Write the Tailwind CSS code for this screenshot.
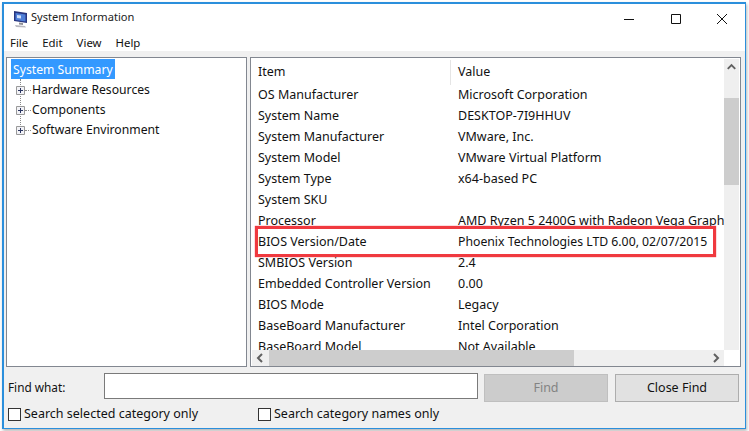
<!DOCTYPE html>
<html lang="en">
<head>
  <meta charset="UTF-8" />
  <title>System Information</title>
  <script src="https://cdn.jsdelivr.net/npm/@tailwindcss/browser@4"></script>
</head>
<body class="w-[749px] h-[431px] overflow-hidden bg-white font-['Noto_Sans',sans-serif] text-[12.5px] text-[#111]">
  <div class="ml-[2px] mt-[2px] w-[744px] h-[427px] border border-[#2b8fdc] border-t-2 border-l-2 flex flex-col bg-[#f0f0f0] shadow-[1px_2px_3px_#b5b5b5]">
    <!-- title bar -->
    <div class="h-[29px] bg-white flex items-center shrink-0">
      <svg class="ml-[7px] w-[18px] h-[18px]" viewBox="0 0 18 18">
        <path d="M3 1l13 2v10l-13-2z" fill="#27357f"/>
        <path d="M4.500 3l10 1.500v7l-10-1.500z" fill="#4f7fd8"/>
        <path d="M6 5l4 .6v3l-4-.6z" fill="#cfe0fb"/>
        <path d="M8 12.500l4 .6v2l-4-.5z" fill="#8e8e96"/>
        <path d="M4 15l10 1 1 1.500-10-.5z" fill="#b9b9c0"/>
      </svg>
      <span class="ml-[2px] pb-[2px] text-[11.1px] text-[#222]">System Information</span>
      <div class="ml-auto flex items-center">
        <svg class="w-[46px] h-[29px]" viewBox="0 0 46 29"><path d="M17 15.500h10" stroke="#111" fill="none"/></svg>
        <svg class="w-[46px] h-[29px]" viewBox="0 0 46 29"><path d="M18.500 10.500h9v9h-9z" stroke="#111" fill="none"/></svg>
        <svg class="w-[46px] h-[29px]" viewBox="0 0 46 29"><path d="M18 10l10 10M28 10l-10 10" stroke="#111" fill="none"/></svg>
      </div>
    </div>
    <!-- menu -->
    <div class="h-[18px] pt-[1px] bg-white flex items-center pl-[6px] gap-[14px] text-[11.4px] shrink-0">
      <span>File</span><span>Edit</span><span>View</span><span>Help</span>
    </div>
    <!-- panes -->
    <div class="mt-[6px] mx-[2px] flex gap-[3px] h-[310px] shrink-0">
      <div class="w-[241px] border border-[#828790] bg-white relative text-[12.2px]">
        <div class="absolute left-[4px] top-[1px] h-[20px] pt-[2px] px-[2px] bg-[#3399ff] text-white flex items-center">System Summary</div>
        <div class="absolute left-[13px] top-[21px] h-[46px] border-l border-dotted border-[#888]"></div>
        <div class="pt-[22px]">
          <div class="h-[20px] flex items-center pl-[9px]">
            <svg class="w-[9px] h-[9px] z-10" viewBox="0 0 9 9"><path d="M.5 .5h8v8h-8z" fill="#f2f2f6" stroke="#999"/><path d="M2 4.500h5M4.500 2v5" stroke="#2a3560"/></svg>
            <span class="w-[6px] border-t border-dotted border-[#888]"></span>
            <span class="ml-[1px]">Hardware Resources</span>
          </div>
          <div class="h-[20px] flex items-center pl-[9px]">
            <svg class="w-[9px] h-[9px] z-10" viewBox="0 0 9 9"><path d="M.5 .5h8v8h-8z" fill="#f2f2f6" stroke="#999"/><path d="M2 4.500h5M4.500 2v5" stroke="#2a3560"/></svg>
            <span class="w-[6px] border-t border-dotted border-[#888]"></span>
            <span class="ml-[1px]">Components</span>
          </div>
          <div class="h-[20px] flex items-center pl-[9px]">
            <svg class="w-[9px] h-[9px] z-10" viewBox="0 0 9 9"><path d="M.5 .5h8v8h-8z" fill="#f2f2f6" stroke="#999"/><path d="M2 4.500h5M4.500 2v5" stroke="#2a3560"/></svg>
            <span class="w-[6px] border-t border-dotted border-[#888]"></span>
            <span class="ml-[1px]">Software Environment</span>
          </div>
        </div>
      </div>
      <div class="w-[491px] border border-[#828790] bg-white relative flex flex-col">
        <div class="flex-1 flex min-h-0">
          <div class="w-[473px] overflow-hidden">
            <div class="h-[27px] pt-[2px] flex items-center">
              <span class="w-[200px] pl-[7px] h-[25px] flex items-center border-r border-[#e5e5e5]">Item</span>
              <span class="pl-[7px]">Value</span>
            </div>
            <div class="h-[21px] flex items-center whitespace-nowrap"><span class="w-[200px] shrink-0 pl-[7px]">OS Manufacturer</span><span class="pl-[7px] shrink-0">Microsoft Corporation</span></div>
            <div class="h-[21px] flex items-center whitespace-nowrap"><span class="w-[200px] shrink-0 pl-[7px]">System Name</span><span class="pl-[7px] shrink-0">DESKTOP-7I9HHUV</span></div>
            <div class="h-[21px] flex items-center whitespace-nowrap"><span class="w-[200px] shrink-0 pl-[7px]">System Manufacturer</span><span class="pl-[7px] shrink-0">VMware, Inc.</span></div>
            <div class="h-[21px] flex items-center whitespace-nowrap"><span class="w-[200px] shrink-0 pl-[7px]">System Model</span><span class="pl-[7px] shrink-0">VMware Virtual Platform</span></div>
            <div class="h-[21px] flex items-center whitespace-nowrap"><span class="w-[200px] shrink-0 pl-[7px]">System Type</span><span class="pl-[7px] shrink-0">x64-based PC</span></div>
            <div class="h-[21px] flex items-center whitespace-nowrap"><span class="w-[200px] shrink-0 pl-[7px]">System SKU</span></div>
            <div class="h-[21px] flex items-center whitespace-nowrap"><span class="w-[200px] shrink-0 pl-[7px]">Processor</span><span class="pl-[7px] shrink-0">AMD Ryzen 5 2400G with Radeon Vega Graphics</span></div>
            <div class="h-[21px] flex items-center whitespace-nowrap"><span class="w-[200px] shrink-0 pl-[7px]">BIOS Version/Date</span><span class="pl-[7px] shrink-0 text-[12.25px]">Phoenix Technologies LTD 6.00, 02/07/2015</span></div>
            <div class="h-[21px] flex items-center whitespace-nowrap"><span class="w-[200px] shrink-0 pl-[7px]">SMBIOS Version</span><span class="pl-[7px] shrink-0">2.4</span></div>
            <div class="h-[21px] flex items-center whitespace-nowrap"><span class="w-[200px] shrink-0 pl-[7px]">Embedded Controller Version</span><span class="pl-[7px] shrink-0">0.00</span></div>
            <div class="h-[21px] flex items-center whitespace-nowrap"><span class="w-[200px] shrink-0 pl-[7px]">BIOS Mode</span><span class="pl-[7px] shrink-0">Legacy</span></div>
            <div class="h-[21px] flex items-center whitespace-nowrap"><span class="w-[200px] shrink-0 pl-[7px]">BaseBoard Manufacturer</span><span class="pl-[7px] shrink-0">Intel Corporation</span></div>
            <div class="h-[21px] flex items-center whitespace-nowrap"><span class="w-[200px] shrink-0 pl-[7px]">BaseBoard Model</span><span class="pl-[7px] shrink-0">Not Available</span></div>
          </div>
          <!-- vertical scrollbar -->
          <div class="w-[15px] mt-[1px] bg-[#efefef] flex flex-col items-center">
            <svg class="w-[15px] h-[16px]" viewBox="0 0 16 16"><path d="M4 10l4-4 4 4" stroke="#606060" stroke-width="2" fill="none"/></svg>
            <div class="w-full h-[87px] mt-[23px] bg-[#cdcdcd]"></div>
          </div>
        </div>
        <!-- horizontal scrollbar -->
        <div class="h-[16px] ml-[1px] mr-[16px] bg-[#efefef] flex items-center shrink-0">
          <svg class="w-[16px] h-[16px]" viewBox="0 0 16 16"><path d="M10 4l-4 4 4 4" stroke="#606060" stroke-width="2" fill="none"/></svg>
          <div class="w-[305px] h-full ml-[1px] bg-[#cdcdcd]"></div>
          <svg class="w-[16px] h-[16px] ml-auto" viewBox="0 0 16 16"><path d="M6 4l4 4-4 4" stroke="#606060" stroke-width="2" fill="none"/></svg>
        </div>
        <!-- annotation -->
        <div class="absolute left-[4px] top-[168px] w-[461px] h-[31px] border-[3px] border-[#f0393f] shadow-[0_0_1px_#f0393f]"></div>
      </div>
    </div>
    <!-- find row -->
    <div class="flex items-start mt-[6px] h-[29px] shrink-0">
      <span class="ml-[4px] w-[96px] self-center text-[11.8px]">Find what:</span>
      <div class="w-[374px] h-[26px] border border-[#7a7a7a] bg-white"></div>
      <div class="ml-[6px] mt-[1px] w-[124px] h-[28px] pt-[1px] bg-[#cccccc] border border-[#bfbfbf] text-[#838383] flex items-center justify-center">Find</div>
      <div class="ml-[7px] mt-[1px] w-[124px] h-[28px] pt-[1px] bg-[#e1e1e1] border border-[#adadad] flex items-center justify-center">Close Find</div>
    </div>
    <!-- options -->
    <div class="flex items-center mt-[3px] h-[18px] shrink-0">
      <span class="ml-[4px] w-[13px] h-[13px] border border-[#333] bg-white"></span>
      <span class="ml-[3px] pt-[1px] w-[234px]">Search selected category only</span>
      <span class="w-[13px] h-[13px] border border-[#333] bg-white"></span>
      <span class="ml-[3px] pt-[1px]">Search category names only</span>
    </div>
  </div>
</body>
</html>
